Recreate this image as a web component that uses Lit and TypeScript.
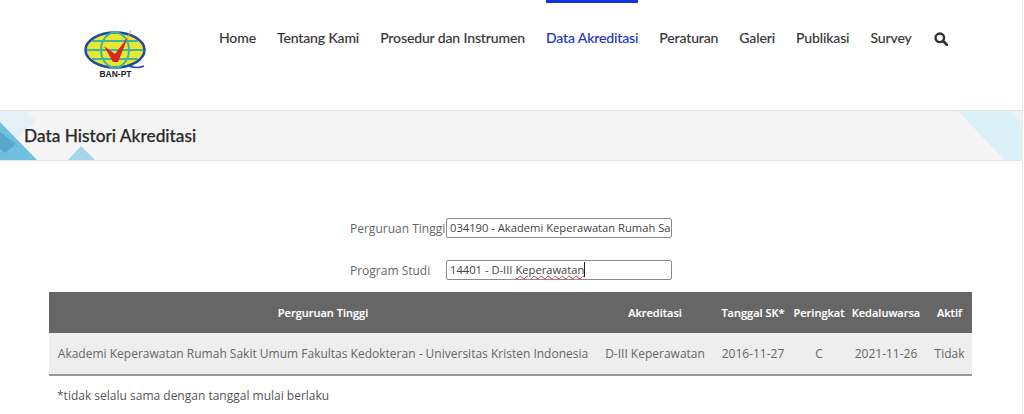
import { LitElement, html, css, svg } from "lit";
import { customElement } from "lit/decorators.js";

const NAV = ["Home", "Tentang Kami", "Prosedur dan Instrumen", "Data Akreditasi", "Peraturan", "Galeri", "Publikasi", "Survey"];

@customElement("app-root")
export class AppRoot extends LitElement {
  static styles = css`
    :host { display: block; width: 1024px; height: 414px; overflow: hidden; background: #fff; font-family: "Open Sans", sans-serif; color: #555; position: relative; }
    .edge { position: absolute; right: 1px; top: 0; bottom: 0; width: 1px; background: #ececec; }
    header { height: 110px; display: flex; align-items: flex-start; }
    .logo { margin: 29px 0 0 84px; width: 63px; flex: none; display: flex; flex-direction: column; align-items: center; }
    .logo svg { display: block; }
    .logo span { font: 700 8.5px/9px "Liberation Sans", sans-serif; color: #222; margin-top: -1px; }
    nav { display: flex; margin-left: 72px; }
    nav a { font: 500 14px/20px Lato, sans-serif; letter-spacing: -0.13px; -webkit-text-stroke: 0.1px currentColor; color: #3a3a3a; padding: 25px 0 0; border-top: 3px solid transparent; margin-right: 21px; height: 20px; white-space: nowrap; }
    nav a.active { color: #1f36c7; border-top-color: #1433e0; }
    .search { margin: 32px 0 0 1px; width: 14px; height: 14px; }
    .band { position: relative; height: 49px; background: #f5f5f5; border-top: 1px solid #e2e2e2; border-bottom: 1px solid #e4e4e4; overflow: hidden; display: flex; align-items: center; padding-left: 24px; margin-right: 2px; }
    .band svg { position: absolute; left: 0; top: 0; }
    .band h1 { position: relative; margin: 0; font: 500 17.3px/24px Lato, sans-serif; -webkit-text-stroke: 0.25px currentColor; color: #2b2b2b; }
    .form { padding-top: 57px; display: flex; flex-direction: column; gap: 22px; }
    .row { display: flex; align-items: center; padding-left: 350px; height: 20px; font-size: 12px; color: #666; }
    .row label { width: 96px; flex: none; white-space: nowrap; }
    .input { width: 226px; height: 20px; box-sizing: border-box; border: 1px solid #8a8a8a; border-radius: 2px; padding: 0 3px; font-size: 11.2px; line-height: 18px; color: #444; white-space: nowrap; }
    .sq { text-decoration: underline wavy #d0304a 1px; text-underline-offset: 1px; border-right: 1px solid #222; }
    table { border-collapse: collapse; table-layout: fixed; width: 923px; margin: 12px 0 0 49px; font-size: 12px; }
    th { background: #666; color: #fff; font-weight: 600; height: 41px; padding: 0; text-align: center; font-size: 11px; -webkit-text-stroke: 0.15px currentColor; white-space: nowrap; }
    td { background: #eee; color: #666; height: 41px; padding: 0; text-align: center; border-bottom: 2px solid #999; white-space: nowrap; }
    .note { margin: 12px 0 0 57px; font-size: 12px; line-height: 16px; color: #555; }
  `;

  render() {
    return html`
      <div class="edge"></div>
      <header>
        <div class="logo">
          <svg width="63" height="42" viewBox="0 0 63 42">
            <ellipse cx="31" cy="21" rx="29.5" ry="17.5" fill="#e8e832" stroke="#1f49a8" stroke-width="2.4"></ellipse>
            <path d="M3 21h56M8 12h46M8 30h46" stroke="#3fb5a0" stroke-width="2" fill="none"></path>
            <ellipse cx="31" cy="21" rx="14" ry="17.5" fill="none" stroke="#3fb5a0" stroke-width="2"></ellipse>
            <path d="M45 37 Q53 40 60 37" stroke="#1f49a8" stroke-width="1.4" fill="none"></path>
            <path d="M20 17 L29 33 L34 33 L44 8 L31 25 Z" fill="#d8261c"></path>
            <path d="M44 8 L47 1" stroke="#d99" stroke-width="1"></path>
          </svg>
          <span>BAN-PT</span>
        </div>
        <nav>
          ${NAV.map((n) => html`<a class=${n === "Data Akreditasi" ? "active" : ""}>${n}</a>`)}
          <svg class="search" viewBox="0 0 14 14"><circle cx="5.8" cy="5.8" r="4.3" fill="none" stroke="#333" stroke-width="2.4"></circle><path d="M9 9l3.8 3.8" stroke="#333" stroke-width="2.8" stroke-linecap="round"></path></svg>
        </nav>
      </header>
      <section class="band">
        <svg width="1022" height="49" viewBox="0 0 1022 49">
          ${svg`
            <path d="M0 0H26L36 10 L14 30 L0 16Z" fill="#e3f0f6"></path>
            <path d="M0 11 L37 49 H0Z" fill="#6fbfe0"></path>
            <path d="M0 21 L16 33 L5 42 L0 38Z" fill="#58a7cf"></path>
            <path d="M68 49 L81 35 L95 49Z" fill="#a5d5ea"></path>
            <path d="M958 0H1012L1022 8V49H1004Z" fill="#dcf0f8"></path>
            <path d="M1010 0H1022V12Z" fill="#eef2f4"></path>
          `}
        </svg>
        <h1>Data Histori Akreditasi</h1>
      </section>
      <div class="form">
        <div class="row"><label>Perguruan Tinggi</label><div class="input">034190 - Akademi Keperawatan Rumah Sa</div></div>
        <div class="row"><label>Program Studi</label><div class="input">14401 - D-III <span class="sq">Keperawatan</span></div></div>
      </div>
      <table>
        <colgroup><col style="width:548px"><col style="width:116px"><col style="width:80px"><col style="width:52px"><col style="width:82px"><col style="width:45px"></colgroup>
        <thead><tr><th>Perguruan Tinggi</th><th>Akreditasi</th><th>Tanggal SK*</th><th>Peringkat</th><th>Kedaluwarsa</th><th>Aktif</th></tr></thead>
        <tbody><tr><td>Akademi Keperawatan Rumah Sakit Umum Fakultas Kedokteran - Universitas Kristen Indonesia</td><td>D-III Keperawatan</td><td>2016-11-27</td><td>C</td><td>2021-11-26</td><td>Tidak</td></tr></tbody>
      </table>
      <div class="note">*tidak selalu sama dengan tanggal mulai berlaku</div>
    `;
  }
}
